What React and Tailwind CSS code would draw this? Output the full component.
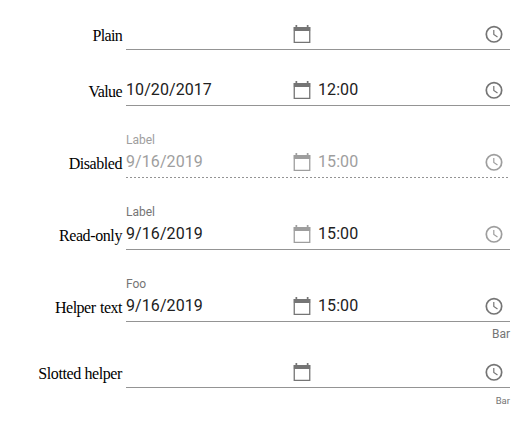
function CalendarIcon({ color }) {
  return (
    <svg className={`h-6 w-6 shrink-0 ${color}`} viewBox="0 0 24 24" fill="currentColor">
      <path d="M5.5 3h1.7v2h9.6V3h1.7v2h2v4h-17V5h2V3Z" />
      <path d="M3.6 9h1.3v10.8h14.2V9h1.3v12H3.6V9Z" />
    </svg>
  );
}

function ClockIcon({ color }) {
  return (
    <svg className={`h-6 w-6 shrink-0 ${color}`} viewBox="0 0 24 24" fill="none" stroke="currentColor">
      <circle cx="12" cy="12.3" r="7.7" strokeWidth="1.7" />
      <path d="M11.8 8v4.5l3.7 2.4" strokeWidth="1.2" />
    </svg>
  );
}

function Input({ value, text, children }) {
  return (
    <div className="flex w-48 items-center pr-1">
      <span className={`flex-1 font-[Roboto,sans-serif] text-base leading-6 tracking-[0.08px] ${text}`}>{value}</span>
      {children}
    </div>
  );
}

const rows = [
  { name: "Plain", height: "h-[50px]", spacing: "tracking-[-0.7px]" },
  { name: "Value", height: "h-14", spacing: "tracking-[-0.6px]", date: "10/20/2017", time: "12:00" },
  { name: "Disabled", height: "h-[72px]", spacing: "tracking-[-0.45px]", label: "Label", date: "9/16/2019", time: "15:00", disabled: true },
  { name: "Read-only", height: "h-[72px]", spacing: "tracking-[-0.4px]", label: "Label", date: "9/16/2019", time: "15:00", readOnly: true },
  { name: "Helper text", height: "h-[72px]", spacing: "tracking-[-0.5px] [word-spacing:1px]", label: "Foo", date: "9/16/2019", time: "15:00" },
  { name: "Slotted helper", height: "h-[42px]", spacing: "tracking-[-0.4px]" },
];

function Row({ name, height, spacing, label, date, time, disabled, readOnly }) {
  const text = disabled ? "text-[#9e9e9e]" : "text-[#212121]";
  const icon = disabled || readOnly ? "text-[#9e9e9e]" : "text-[#757575]";
  return (
    <div className={`flex items-end ${height}`}>
      <div className={`w-[126px] shrink-0 pr-1 pb-1 text-right font-['Liberation_Serif',serif] text-base leading-5 whitespace-nowrap text-black ${spacing}`}>
        {name}
      </div>
      <div className="w-96">
        {label && (
          <div className={`mb-0.5 font-[Roboto,sans-serif] text-xs leading-4 ${disabled ? "text-[#9e9e9e]" : "text-[#757575]"}`}>{label}</div>
        )}
        <div className={`flex border-b pb-[3px] ${disabled ? "border-transparent bg-[repeating-linear-gradient(90deg,#949494_0_2px,transparent_2px_4px)] bg-[length:100%_1px] bg-bottom bg-no-repeat bg-origin-border" : "border-[#949494]"}`}>
          <Input value={date} text={text}><CalendarIcon color={icon} /></Input>
          <Input value={time} text={text}><ClockIcon color={icon} /></Input>
        </div>
      </div>
    </div>
  );
}

export default function App() {
  return (
    <main className="h-[424px] w-[520px] overflow-hidden bg-white">
      {rows.slice(0, 5).map((row) => <Row key={row.name} {...row} />)}
      <div className="h-6 w-[510px] pt-1 text-right font-[Roboto,sans-serif] text-xs leading-4 text-[#757575]">Bar</div>
      <Row {...rows[5]} />
      <div className="w-[510px] pt-[5px] text-right font-[Roboto,sans-serif] text-[9.5px] leading-4 text-[#757575]">Bar</div>
    </main>
  );
}
